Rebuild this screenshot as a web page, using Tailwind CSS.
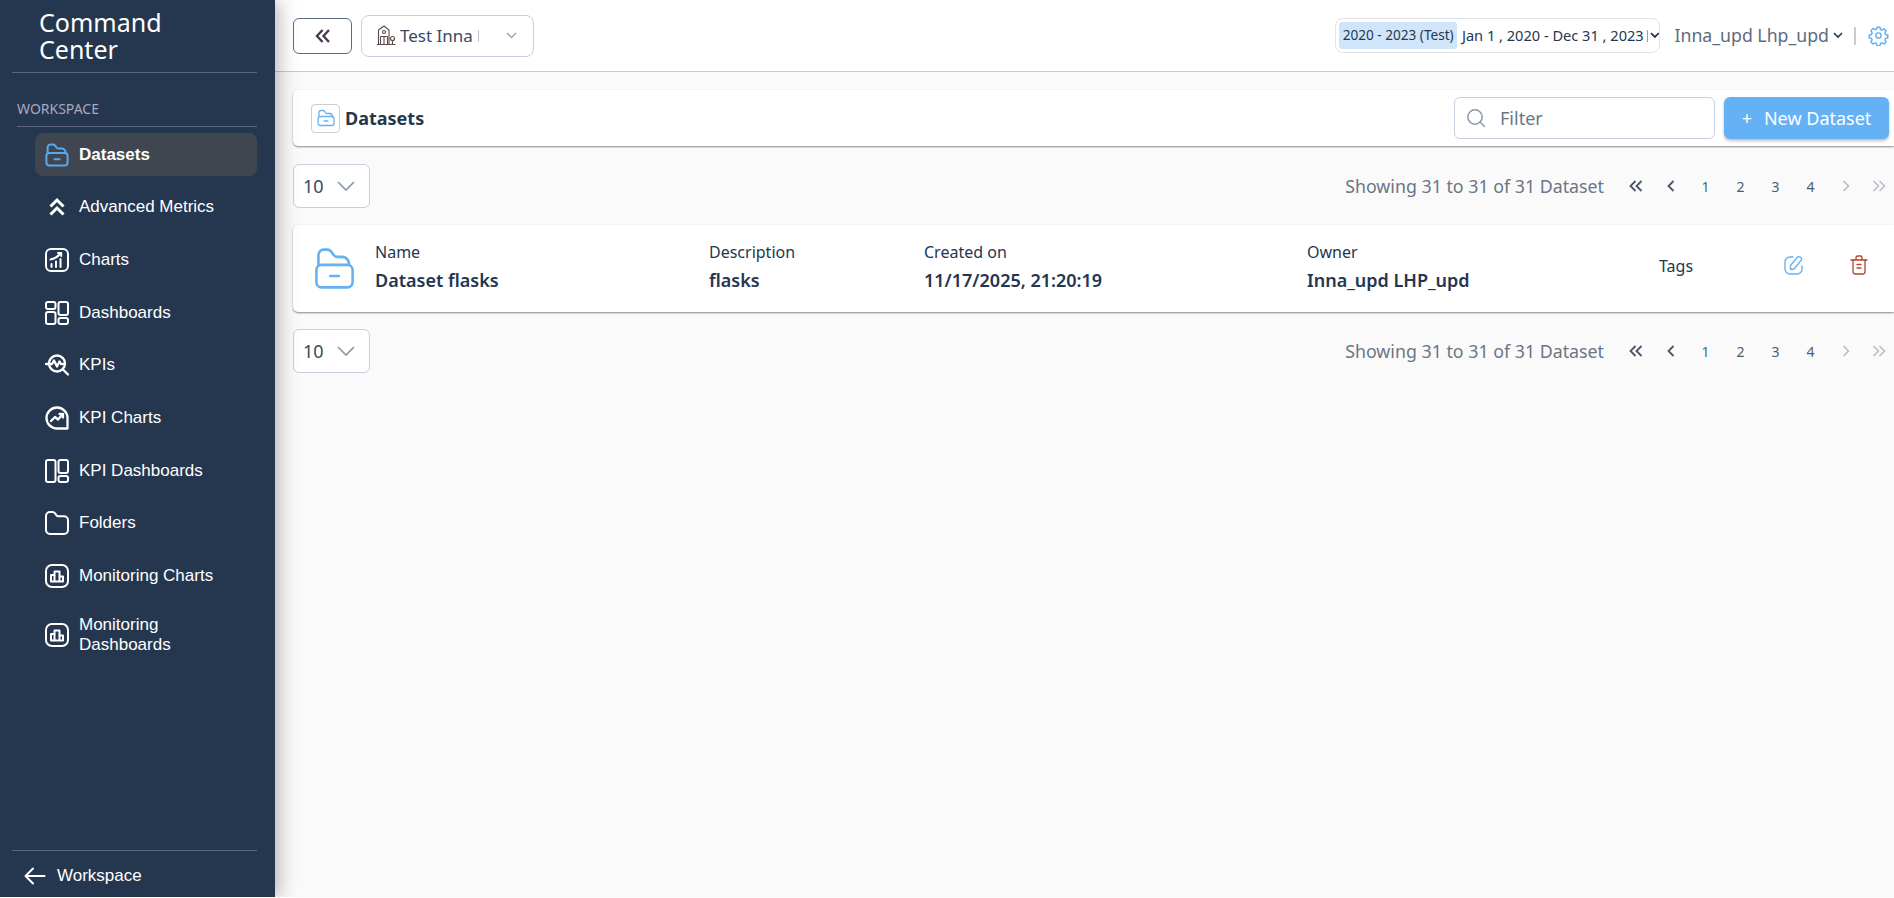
<!DOCTYPE html>
<html lang="en">
<head>
  <meta charset="UTF-8">
  <meta name="viewport" content="width=device-width, initial-scale=1.0">
  <title>Command Center</title>
  <script src="https://cdn.jsdelivr.net/npm/@tailwindcss/browser@4"></script>
</head>

<body class="bg-white font-['Noto_Sans',sans-serif] text-[#25364f] overflow-hidden">

  <div class="flex h-[897px] w-full">

    <!-- sidebar -->
    <aside class="relative z-10 w-[275px] shrink-0 bg-[#25364f] text-white flex flex-col shadow-[4px_0_18px_rgba(0,0,0,0.28)] font-['Liberation_Sans',sans-serif]">
      <div class="ml-[12px] mr-[18px] h-[73px] border-b border-[#5b6478] pl-[27px] pt-[9px] font-['Noto_Sans',sans-serif] text-[25px] leading-[26.5px]">
        <div class="w-[150px]">Command Center</div>
      </div>
      <div class="pl-[17px] pt-[27px] text-[14px] leading-[18px] text-[#a9a9bb] font-['Noto_Sans',sans-serif]">WORKSPACE</div>
      <div class="ml-[17px] mr-[18px] mt-[8px] border-b border-[#5b6478]"></div>

      <nav class="ml-[35px] mr-[18px] mt-[6px] flex flex-col gap-[9.7px] text-[17px] leading-[20px]">
        <a class="flex items-center gap-[10px] min-h-[43px] pl-[10px] rounded-lg bg-[#40464f] font-bold">
          <svg class="w-[24px] h-[24px] shrink-0" viewBox="0 0 24 24" fill="none" stroke="#5aa9ef" stroke-width="2" stroke-linecap="round" stroke-linejoin="round"><path d="M2.600 10V4.500a3 3 0 0 1 3-3h2.200c.9 0 1.700.4 2.300 1.100l1.500 2c.4.500 1 .9 1.700.9h3.200a4 4 0 0 1 4 4"/><rect x="1.400" y="10" width="21.200" height="12.500" rx="3"/><path d="M9.500 16.200h5"/></svg>
          <span>Datasets</span>
        </a>
        <a class="flex items-center gap-[10px] min-h-[43px] pl-[10px]">
          <svg class="w-[24px] h-[24px] shrink-0" viewBox="0 0 24 24" fill="none" stroke="#fff" stroke-width="3" stroke-linejoin="miter"><path d="M5.500 11.500 12 5l6.500 6.500"/><path d="M5.500 19.500 12 13l6.500 6.500"/></svg>
          <span>Advanced Metrics</span>
        </a>
        <a class="flex items-center gap-[10px] min-h-[43px] pl-[10px]">
          <svg class="w-[24px] h-[24px] shrink-0" viewBox="0 0 24 24" fill="none" stroke="#fff" stroke-width="2" stroke-linecap="round" stroke-linejoin="round"><rect x="1" y="1" width="22" height="22" rx="5"/><path d="M6.500 19v-3M11 19v-5.500M15.500 19v-8"/><path d="M5.500 11.500c3.500-.6 7-2.600 10-6"/><path d="M13 5h3.200v3"/></svg>
          <span>Charts</span>
        </a>
        <a class="flex items-center gap-[10px] min-h-[43px] pl-[10px]">
          <svg class="w-[24px] h-[24px] shrink-0" viewBox="0 0 24 24" fill="none" stroke="#fff" stroke-width="2"><rect x="1" y="1" width="9.500" height="7" rx="2"/><rect x="1" y="11" width="9.500" height="12" rx="2"/><rect x="13.500" y="1" width="9.500" height="13" rx="2"/><rect x="13.500" y="17" width="9.500" height="6" rx="2"/></svg>
          <span>Dashboards</span>
        </a>
        <a class="flex items-center gap-[10px] min-h-[43px] pl-[10px]">
          <svg class="w-[24px] h-[24px] shrink-0" viewBox="0 0 24 24" fill="none" stroke="#fff" stroke-width="2.300" stroke-linecap="round" stroke-linejoin="round"><circle cx="12" cy="10.500" r="8"/><path d="m18 16.500 5 5"/><path d="M1 11h6l2-3.500 3 6 2.500-5 1.500 2.500H18"/></svg>
          <span>KPIs</span>
        </a>
        <a class="flex items-center gap-[10px] min-h-[43px] pl-[10px]">
          <svg class="w-[24px] h-[24px] shrink-0" viewBox="0 0 24 24" fill="none" stroke="#fff" stroke-width="2.300" stroke-linecap="round" stroke-linejoin="round"><path d="M22.500 22.500H12A10.500 10.500 0 1 1 22.500 12z"/><path d="m6 15 4-4 3 2.500 4.500-5"/><path d="M14.500 8h3.500v3.500"/></svg>
          <span>KPI Charts</span>
        </a>
        <a class="flex items-center gap-[10px] min-h-[43px] pl-[10px]">
          <svg class="w-[24px] h-[24px] shrink-0" viewBox="0 0 24 24" fill="none" stroke="#fff" stroke-width="2"><rect x="1" y="1" width="9.500" height="22" rx="2"/><rect x="13.500" y="1" width="9.500" height="13" rx="2"/><rect x="13.500" y="17" width="9.500" height="6" rx="2"/></svg>
          <span>KPI Dashboards</span>
        </a>
        <a class="flex items-center gap-[10px] min-h-[43px] pl-[10px]">
          <svg class="w-[24px] h-[24px] shrink-0" viewBox="0 0 24 24" fill="none" stroke="#fff" stroke-width="2" stroke-linejoin="round"><path d="M1 5a4 4 0 0 1 4-4h2.500c1 0 1.800.4 2.400 1.200l1.600 2.100c.5.700 1.200 1 2 1H19a4 4 0 0 1 4 4V19a4 4 0 0 1-4 4H5a4 4 0 0 1-4-4z"/></svg>
          <span>Folders</span>
        </a>
        <a class="flex items-center gap-[10px] min-h-[43px] pl-[10px]">
          <svg class="w-[24px] h-[24px] shrink-0" viewBox="0 0 24 24" fill="none" stroke="#fff" stroke-width="2" stroke-linejoin="round"><rect x="1" y="1" width="22" height="22" rx="6"/><path d="M6 17.500h12v-5h-3.500v-5h-5v3.500H6z"/><path d="M9.500 11v6.500M14.500 12.500v5"/></svg>
          <span>Monitoring Charts</span>
        </a>
        <a class="flex items-center gap-[10px] min-h-[43px] py-[8px] pl-[10px]">
          <svg class="w-[24px] h-[24px] shrink-0" viewBox="0 0 24 24" fill="none" stroke="#fff" stroke-width="2" stroke-linejoin="round"><rect x="1" y="1" width="22" height="22" rx="6"/><path d="M6 17.500h12v-5h-3.500v-5h-5v3.500H6z"/><path d="M9.500 11v6.500M14.500 12.500v5"/></svg>
          <span class="w-[130px]">Monitoring Dashboards</span>
        </a>
      </nav>

      <div class="mt-auto ml-[12px] mr-[18px] border-t border-[#5b6478] h-[47px] pt-[3px] flex items-center pl-[12px] gap-[11px] text-[17px]">
        <svg class="w-[22px] h-[18px]" viewBox="0 0 22 18" fill="none" stroke="#fff" stroke-width="2" stroke-linecap="round" stroke-linejoin="round"><path d="M20.500 9H1.500M9 1.500 1.500 9 9 16.500"/></svg>
        <span>Workspace</span>
      </div>
    </aside>

    <main class="flex-1 min-w-0 bg-[#fafafa] flex flex-col">

      <!-- top bar -->
      <header class="h-[72px] shrink-0 bg-white border-b border-[#c9c9c9] pl-[18px] pr-[5px] flex items-center">
        <button class="w-[59px] h-[36px] mt-[1px] rounded-md border border-[#5d6b85] flex items-center justify-center">
          <svg class="w-[18px] h-[18px]" viewBox="0 0 18 18" fill="none" stroke="#4a3b52" stroke-width="2.400"><path d="M8.500 3 3 9l5.500 6M15 3 9.500 9l5.500 6"/></svg>
        </button>
        <div class="ml-[9px] w-[173px] h-[42px] rounded-lg border border-[#c5d0e0] flex items-center pl-[15px] text-[17px] text-[#3a4a63]">
          <svg class="w-[19px] h-[21px] shrink-0" viewBox="0 0 19 21" fill="none" stroke="#5f4a4a" stroke-width="1.100"><path d="M1.500 19.500V5L7 1l5 4v14.500M0 19.500h18.500"/><circle cx="7" cy="7" r="1.500"/><path d="M3.500 11.500h7M3.500 11.500v8M10.500 11.500v8M7 11.500v8"/><circle cx="15.500" cy="13.500" r="2"/><path d="M15.500 15.500v4"/></svg>
          <span class="ml-[4px]">Test Inna</span>
          <span class="ml-[5px] h-[12px] w-[1px] bg-[#c0c4cc]"></span>
          <svg class="ml-[27px] w-[11px] h-[7px]" viewBox="0 0 11 7" fill="none" stroke="#9aa5b4" stroke-width="1.400"><path d="m1 1 4.500 4.500L10 1"/></svg>
        </div>

        <div class="ml-auto w-[325px] h-[35px] rounded-lg border border-[#dfe3e9] flex items-center pl-[3px] text-[#25364f]">
          <span class="h-[27px] w-[120px] rounded-[3px] bg-[#cfe6fa] flex items-center justify-center whitespace-nowrap text-[13.6px]">2020 - 2023 (Test)</span>
          <span class="ml-[5px] whitespace-nowrap text-[14.6px]">Jan 1 , 2020 - Dec 31 , 2023</span>
          <span class="ml-[3px] h-[12px] w-[1px] bg-[#9aa0aa]"></span>
          <svg class="ml-[2px] w-[10px] h-[7px]" viewBox="0 0 10 7" fill="none" stroke="#25364f" stroke-width="1.800"><path d="m1 1 4 4 4-4"/></svg>
        </div>
        <span class="ml-[14px] text-[17.7px] text-[#5d6b7f] whitespace-nowrap">Inna_upd Lhp_upd</span>
        <svg class="ml-[4px] w-[10px] h-[7px]" viewBox="0 0 10 7" fill="none" stroke="#25364f" stroke-width="1.600"><path d="m1 1 4 4 4-4"/></svg>
        <span class="ml-[11px] h-[18px] w-[2px] bg-[#c6cad1]"></span>
        <svg class="ml-[12px] w-[21px] h-[21px]" viewBox="0 0 24 24" fill="none" stroke="#64b1f5" stroke-width="1.700" stroke-linejoin="round"><circle cx="12" cy="12" r="3"/><path d="M10.300 2.500h3.400l.6 2.600 1.700.7 2.300-1.400 2.400 2.400-1.400 2.300.7 1.700 2.600.6v3.400l-2.600.6-.7 1.700 1.400 2.300-2.400 2.400-2.300-1.400-1.700.7-.6 2.600h-3.400l-.6-2.600-1.700-.7-2.300 1.400-2.400-2.400 1.400-2.300-.7-1.700-2.600-.6v-3.400l2.600-.6.7-1.700L3.400 6.300l2.400-2.400 2.300 1.400 1.700-.7z"/></svg>
      </header>

      <div class="flex-1 pl-[18px] pt-[18px]">

        <!-- title bar -->
        <section class="h-[56px] bg-white rounded-l-[5px] shadow-[0_1px_2px_rgba(0,0,0,0.45)] flex items-center pl-[18px] pr-[5px]">
          <div class="w-[29px] h-[29px] rounded border border-[#c9ced6] flex items-center justify-center">
            <svg class="w-[18px] h-[18px]" viewBox="0 0 24 24" fill="none" stroke="#64b1f5" stroke-width="1.700" stroke-linecap="round" stroke-linejoin="round"><path d="M2.600 10V5a3 3 0 0 1 3-3h2.200c.9 0 1.700.4 2.300 1.100l1.500 2c.4.500 1 .9 1.700.9h3.200a4 4 0 0 1 4 4"/><rect x="1.400" y="10" width="21.200" height="12" rx="3"/><path d="M9.500 16h5"/></svg>
          </div>
          <h1 class="ml-[5px] text-[18px] font-bold">Datasets</h1>
          <div class="ml-auto w-[261px] h-[42px] rounded-md border border-[#c5d0e0] flex items-center pl-[11px] text-[18px] text-[#6b7686]">
            <svg class="w-[20px] h-[20px]" viewBox="0 0 20 20" fill="none" stroke="#8a99aa" stroke-width="1.500" stroke-linecap="round"><circle cx="9" cy="9" r="7.200"/><path d="m14.500 14.500 4 4"/></svg>
            <span class="ml-[14px]">Filter</span>
          </div>
          <button class="ml-[9px] w-[165px] h-[42px] rounded-md bg-[#64b1f5] text-white text-[18px] flex items-center justify-center gap-[12px] shadow-[0_2px_3px_rgba(0,0,0,0.25)]">
            <span class="text-[18px] leading-none">+</span>
            <span>New Dataset</span>
          </button>
        </section>

        <!-- top pagination -->
        <div class="mt-[18px] h-[44px] flex items-center">
          <div class="w-[77px] h-[44px] rounded-md border border-[#c5d0e0] bg-white flex items-center pl-[9px] text-[18px] text-[#3a4a63]">
            <span>10</span>
            <svg class="ml-[13px] w-[18px] h-[10px]" viewBox="0 0 18 10" fill="none" stroke="#8a99aa" stroke-width="1.700"><path d="m1 1 8 8 8-8"/></svg>
          </div>
          <span class="ml-auto text-[17.8px] text-[#6b7686] whitespace-nowrap">Showing 31 to 31 of 31 Dataset</span>
          <div class="ml-[14px] flex items-center text-[14px] text-[#4b5b70]">
            <span class="w-[35px] flex justify-center"><svg class="w-[14px] h-[12px]" viewBox="0 0 14 12" fill="none" stroke="#4b5566" stroke-width="1.800"><path d="M6.500 1 1.500 6l5 5M12.500 1l-5 5 5 5"/></svg></span>
            <span class="w-[35px] flex justify-center"><svg class="w-[8px] h-[12px]" viewBox="0 0 8 12" fill="none" stroke="#4b5566" stroke-width="1.800"><path d="M6.500 1 1.500 6l5 5"/></svg></span>
            <span class="w-[35px] text-center text-[#3c6e9a]">1</span>
            <span class="w-[35px] text-center">2</span>
            <span class="w-[35px] text-center">3</span>
            <span class="w-[35px] text-center">4</span>
            <span class="w-[35px] flex justify-center"><svg class="w-[8px] h-[12px]" viewBox="0 0 8 12" fill="none" stroke="#b4bbc6" stroke-width="1.500"><path d="m1.500 1 5 5-5 5"/></svg></span>
            <span class="w-[31px] flex justify-center"><svg class="w-[14px] h-[12px]" viewBox="0 0 14 12" fill="none" stroke="#b4bbc6" stroke-width="1.500"><path d="m1.500 1 5 5-5 5M7.500 1l5 5-5 5"/></svg></span>
          </div>
        </div>

        <!-- dataset row -->
        <section class="mt-[17px] h-[87px] bg-white rounded-l-[5px] shadow-[0_1px_2px_rgba(0,0,0,0.45)] flex items-center text-[#25364f]">
          <svg class="ml-[21px] w-[41px] h-[43px] shrink-0" viewBox="0 0 24 24" fill="none" stroke="#64b1f5" stroke-width="1.500" stroke-linecap="round" stroke-linejoin="round" preserveAspectRatio="none"><path d="M2.600 10V4.500a3 3 0 0 1 3-3h2.200c.9 0 1.700.4 2.300 1.100l1.500 2c.4.500 1 .9 1.700.9h3.200a4 4 0 0 1 4 4"/><rect x="1.400" y="10" width="21.200" height="12.500" rx="3"/><path d="M9.500 16.200h5"/></svg>
          <div class="ml-[20px] w-[334px] mb-[5px]">
            <div class="text-[16px] leading-[22px]">Name</div>
            <div class="mt-[6px] text-[18px] leading-[22px] font-semibold">Dataset flasks</div>
          </div>
          <div class="w-[215px] mb-[5px]">
            <div class="text-[16px] leading-[22px]">Description</div>
            <div class="mt-[6px] text-[18px] leading-[22px] font-semibold">flasks</div>
          </div>
          <div class="w-[383px] mb-[5px]">
            <div class="text-[16px] leading-[22px]">Created on</div>
            <div class="mt-[6px] text-[18px] leading-[22px] font-semibold">11/17/2025, 21:20:19</div>
          </div>
          <div class="w-[352px] mb-[5px]">
            <div class="text-[16px] leading-[22px]">Owner</div>
            <div class="mt-[6px] text-[18px] leading-[22px] font-semibold">Inna_upd LHP_upd</div>
          </div>
          <div class="w-[125px] text-[16px] mb-[6px]">Tags</div>
          <svg class="w-[20px] h-[20px] mb-[8px]" viewBox="0 0 20 20" fill="none" stroke="#64b1f5" stroke-width="1.400" stroke-linecap="round" stroke-linejoin="round"><path d="M9 2H6a5 5 0 0 0-5 5v7a5 5 0 0 0 5 5h7a5 5 0 0 0 5-5v-3"/><path d="m6.500 10.500 7-8.500c1-1 3.500 0 4 1.500.2.700 0 1.500-.5 2l-7 8.500-3.500.5z"/></svg>
          <svg class="ml-[46px] w-[18px] h-[20px] mb-[8px]" viewBox="0 0 18 20" fill="none" stroke="#b5432a" stroke-width="1.300" stroke-linecap="round" stroke-linejoin="round"><path d="M1 5h16M6 5V2.500A1.500 1.500 0 0 1 7.500 1h3A1.500 1.500 0 0 1 12 2.500V5"/><path d="M3 5v11.500A2.500 2.500 0 0 0 5.500 19h7a2.500 2.500 0 0 0 2.500-2.500V5"/><path d="M7 9.500h4M7 13h4"/></svg>
        </section>

        <!-- bottom pagination -->
        <div class="mt-[17px] h-[44px] flex items-center">
          <div class="w-[77px] h-[44px] rounded-md border border-[#c5d0e0] bg-white flex items-center pl-[9px] text-[18px] text-[#3a4a63]">
            <span>10</span>
            <svg class="ml-[13px] w-[18px] h-[10px]" viewBox="0 0 18 10" fill="none" stroke="#8a99aa" stroke-width="1.700"><path d="m1 1 8 8 8-8"/></svg>
          </div>
          <span class="ml-auto text-[17.8px] text-[#6b7686] whitespace-nowrap">Showing 31 to 31 of 31 Dataset</span>
          <div class="ml-[14px] flex items-center text-[14px] text-[#4b5b70]">
            <span class="w-[35px] flex justify-center"><svg class="w-[14px] h-[12px]" viewBox="0 0 14 12" fill="none" stroke="#4b5566" stroke-width="1.800"><path d="M6.500 1 1.500 6l5 5M12.500 1l-5 5 5 5"/></svg></span>
            <span class="w-[35px] flex justify-center"><svg class="w-[8px] h-[12px]" viewBox="0 0 8 12" fill="none" stroke="#4b5566" stroke-width="1.800"><path d="M6.500 1 1.500 6l5 5"/></svg></span>
            <span class="w-[35px] text-center text-[#3c6e9a]">1</span>
            <span class="w-[35px] text-center">2</span>
            <span class="w-[35px] text-center">3</span>
            <span class="w-[35px] text-center">4</span>
            <span class="w-[35px] flex justify-center"><svg class="w-[8px] h-[12px]" viewBox="0 0 8 12" fill="none" stroke="#b4bbc6" stroke-width="1.500"><path d="m1.500 1 5 5-5 5"/></svg></span>
            <span class="w-[31px] flex justify-center"><svg class="w-[14px] h-[12px]" viewBox="0 0 14 12" fill="none" stroke="#b4bbc6" stroke-width="1.500"><path d="m1.500 1 5 5-5 5M7.500 1l5 5-5 5"/></svg></span>
          </div>
        </div>
      </div>
    </main>
  </div>

</body>
</html>
